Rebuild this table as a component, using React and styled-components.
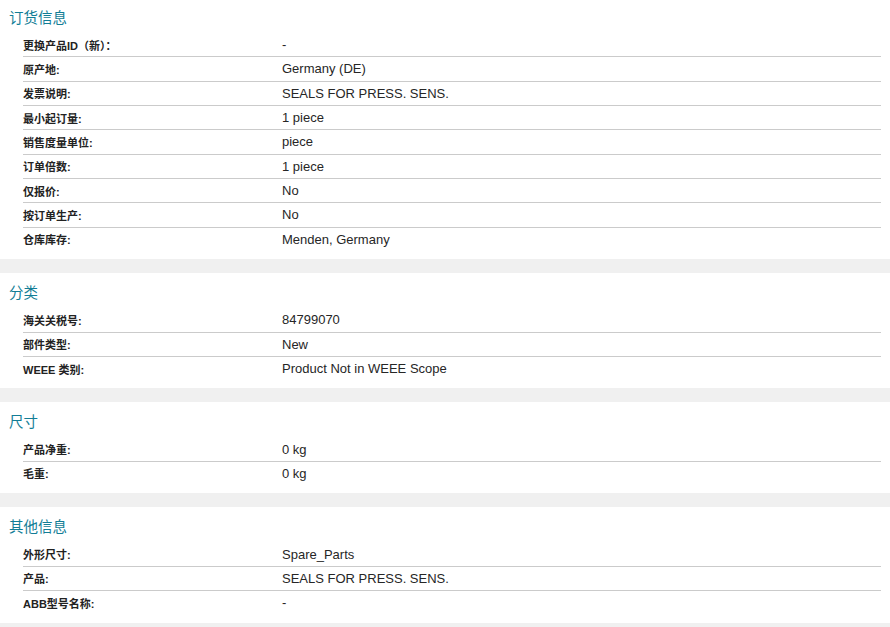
import React from "react";
import styled, { createGlobalStyle } from "styled-components";

const GlobalStyle = createGlobalStyle`
  html, body {
    margin: 0;
    padding: 0;
    background: #f0f0f0;
  }
  body {
    font-family: "Liberation Sans", Arial, "Noto Sans CJK SC", sans-serif;
    color: #262626;
    overflow: hidden;
  }
`;

const sections = [
  {
    title: "订货信息",
    rows: [
      ["更换产品ID（新）：", "-"],
      ["原产地:", "Germany (DE)"],
      ["发票说明:", "SEALS FOR PRESS. SENS."],
      ["最小起订量:", "1 piece"],
      ["销售度量单位:", "piece"],
      ["订单倍数:", "1 piece"],
      ["仅报价:", "No"],
      ["按订单生产:", "No"],
      ["仓库库存:", "Menden, Germany"],
    ],
  },
  {
    title: "分类",
    rows: [
      ["海关关税号:", "84799070"],
      ["部件类型:", "New"],
      ["WEEE 类别:", "Product Not in WEEE Scope"],
    ],
  },
  {
    title: "尺寸",
    rows: [
      ["产品净重:", "0 kg"],
      ["毛重:", "0 kg"],
    ],
  },
  {
    title: "其他信息",
    rows: [
      ["外形尺寸:", "Spare_Parts"],
      ["产品:", "SEALS FOR PRESS. SENS."],
      ["ABB型号名称:", "-"],
    ],
  },
];

const Page = styled.div`
  display: flex;
  flex-direction: column;
  gap: 14px;
  margin-top: -2px;
`;

const Section = styled.section`
  background: #fff;
  padding: 8px 9px 8.25px 9px;
`;

const Title = styled.h3`
  margin: 0 0 6px;
  font-family: "Noto Sans CJK SC", "Liberation Sans", sans-serif;
  font-size: 14.5px;
  line-height: 21px;
  font-weight: 400;
  color: #127d96;
`;

const Table = styled.div`
  margin-left: 14px;
  display: flex;
  flex-direction: column;
`;

const Row = styled.div`
  display: grid;
  grid-template-columns: 259px 1fr;
  align-items: center;
  height: 23.33px;
  border-bottom: 1px solid #cbcbcb;

  &:last-child {
    border-bottom: none;
  }
`;

const Label = styled.div`
  font-family: "Liberation Sans", Arial, "Noto Sans CJK SC", sans-serif;
  font-size: 11px;
  font-weight: 700;
  color: #222;
  white-space: nowrap;
`;

const Value = styled.div`
  font-size: 13px;
  color: #262626;
  white-space: nowrap;
`;

export default function App() {
  return (
    <>
      <GlobalStyle />
      <Page>
        {sections.map((s) => (
          <Section key={s.title}>
            <Title>{s.title}</Title>
            <Table>
              {s.rows.map(([label, value]) => (
                <Row key={label}>
                  <Label>{label}</Label>
                  <Value>{value}</Value>
                </Row>
              ))}
            </Table>
          </Section>
        ))}
      </Page>
    </>
  );
}
